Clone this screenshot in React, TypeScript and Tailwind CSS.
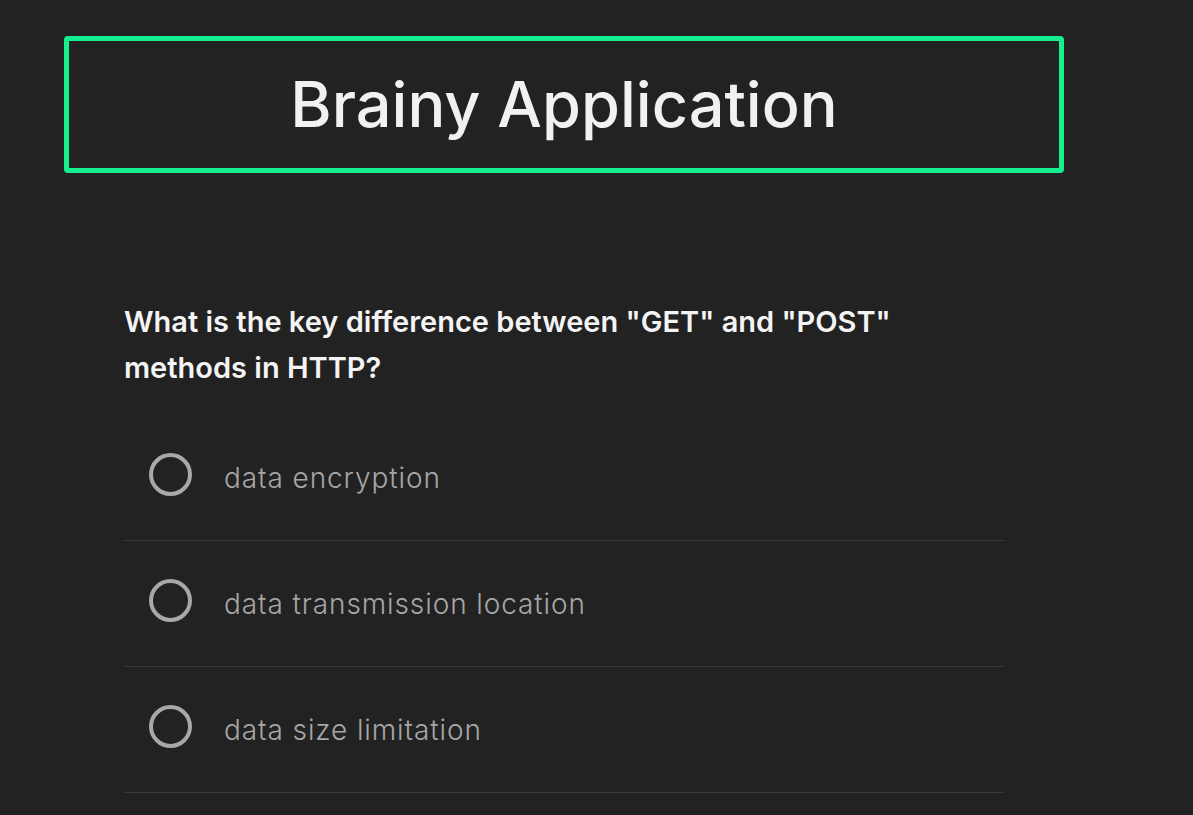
import React from "react";

const options = ["data encryption", "data transmission location", "data size limitation"];

export default function App() {
    return (
        <main className="min-h-screen bg-[#222222] pt-[36px] font-['Inter','Noto_Sans',sans-serif]">
            <div className="ml-[64px] w-[1000px]">
                <header className="flex h-[137px] items-center justify-center rounded-[4px] border-[5px] border-[#14f08f]">
                    <h1 className="text-[63px] font-medium text-[#f1f1f1]">Brainy Application</h1>
                </header>

                <section className="px-[60px] pt-[126px]">
                    <h2 className="text-[29px] font-semibold leading-[46px] text-[#f4f4f4]">
                        What is the key difference between "GET" and "POST" methods in HTTP?
                    </h2>

                    <ul className="mt-[24px]">
                        {options.map((opt) => (
                            <li key={opt} className="flex h-[126px] items-center border-b border-[#3a3a3a] pb-[6px]">
                                <span className="ml-[25px] h-[43px] w-[43px] rounded-full border-[4px] border-[#a8a8a8]" />
                                <span className="ml-[32px] mt-[6px] text-[28px] font-light tracking-[0.9px] text-[#a6a6a6]">{opt}</span>
                            </li>
                        ))}
                    </ul>
                </section>
            </div>
        </main>
    );
}
